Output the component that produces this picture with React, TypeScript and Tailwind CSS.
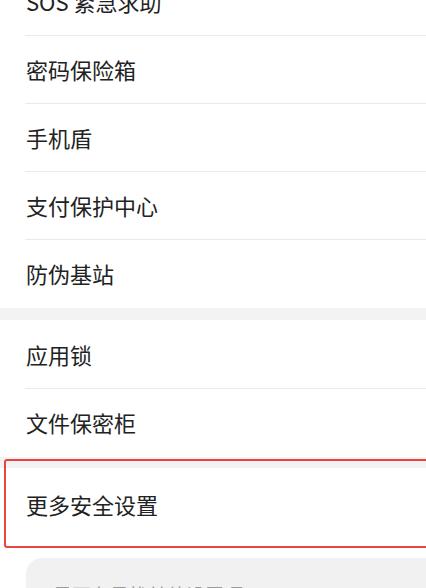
const font = { fontFamily: '"Noto Sans CJK SC", "Noto Sans", sans-serif' };

function Row({ label, divider = true }: { label: string; divider?: boolean }) {
    return (
        <div className="h-[68px] flex flex-col">
            <div className="flex-1 flex items-center pl-[26px] text-[22px] text-[#222]">{label}</div>
            {divider ? <div className="ml-[25px] h-px bg-[#e9e9e9]"></div> : <div className="h-px"></div>}
        </div>
    );
}

export default function App() {
    return (
        <div className="w-[426px] h-[588px] overflow-hidden bg-white" style={font}>
            {/* Section 1 */}
            <div className="-mt-[32px] bg-white">
                <Row label="SOS 紧急求助" />
                <Row label="密码保险箱" />
                <Row label="手机盾" />
                <Row label="支付保护中心" />
                <Row label="防伪基站" divider={false} />
            </div>

            <div className="h-[12px] bg-[#f3f3f3]"></div>

            {/* Section 2 */}
            <div className="bg-white">
                <div className="h-[69px] flex flex-col">
                    <div className="flex-1 flex items-center pl-[26px] text-[22px] text-[#222]">应用锁</div>
                    <div className="ml-[25px] h-px bg-[#e9e9e9]"></div>
                </div>
                <Row label="文件保密柜" divider={false} />
            </div>

            {/* Section 3 with highlight */}
            <div className="relative">
                <div className="h-[11px] bg-[#f3f3f3]"></div>
                <div className="h-[72px] flex items-center pl-[26px] text-[22px] text-[#222] bg-white">更多安全设置</div>
                <div className="h-[18px] bg-white"></div>
                <div className="absolute left-[4px] top-[2px] w-[440px] h-[89px] border-2 border-[#e8453f] rounded-[3px]"></div>
            </div>

            {/* Suggestion card */}
            <div className="ml-[26px] bg-[#f1f1f1] rounded-tl-[16px] h-[60px] pt-[23px] pl-[27px] text-[19px] text-[#9a9a9a]">
                是否在寻找其他设置项？
            </div>
        </div>
    );
}
